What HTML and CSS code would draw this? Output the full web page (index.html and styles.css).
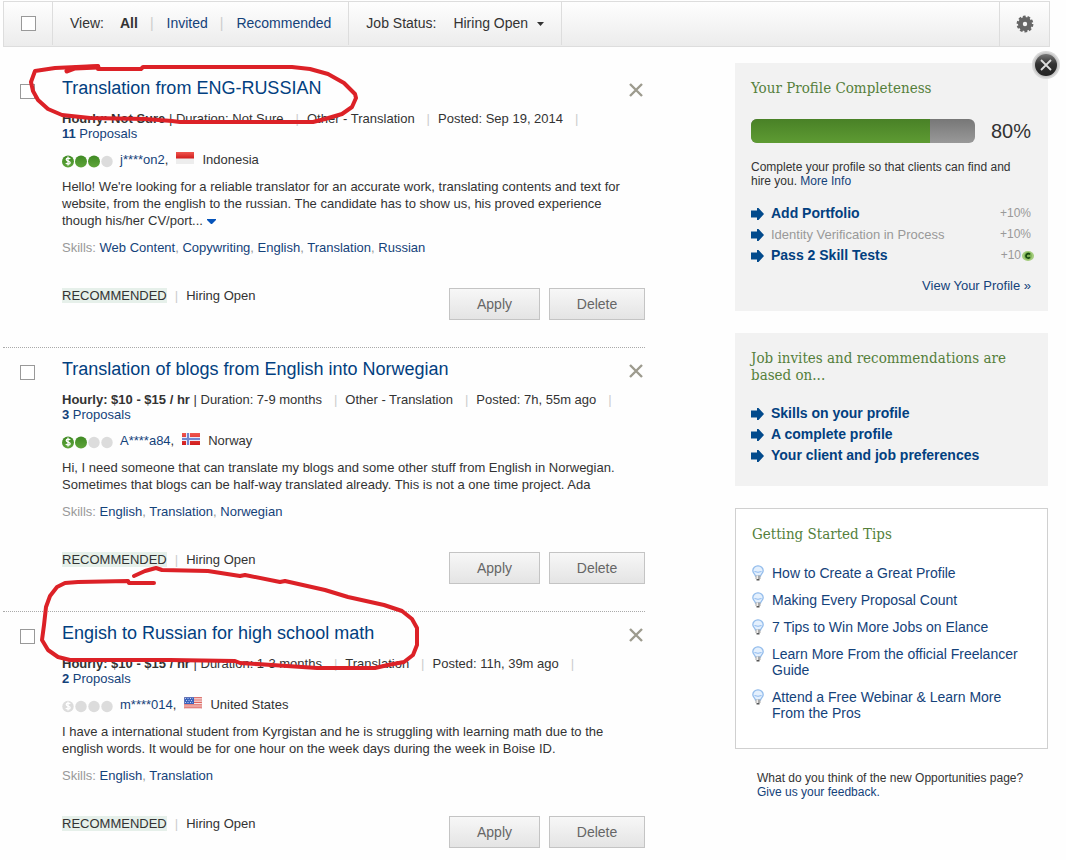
FILE: index.html
```html
<!DOCTYPE html>
<html lang="en">
<head>
    <meta charset="utf-8">
    <title>Opportunities</title>
    <link rel="stylesheet" href="styles.css">
</head>
<body>
    <!-- shared icons -->
    <svg class="defs" width="0" height="0" aria-hidden="true">
        <defs>
            <linearGradient id="greenGrad" x1="0" y1="0" x2="0" y2="1">
                <stop offset="0" stop-color="#3f8a24"/><stop offset="1" stop-color="#5fa53a"/>
            </linearGradient>
            <linearGradient id="badgeGrad" x1="0" y1="0" x2="0" y2="1">
                <stop offset="0" stop-color="#777"/><stop offset="0.45" stop-color="#333"/><stop offset="1" stop-color="#222"/>
            </linearGradient>
            <linearGradient id="redGrad" x1="0" y1="0" x2="0" y2="1">
                <stop offset="0" stop-color="#f0564f"/><stop offset="1" stop-color="#d01c1c"/>
            </linearGradient>
        </defs>
        <symbol id="arrow" viewBox="0 0 13 12"><path fill="#024a8c" d="M0 2.500h6V0h1.500L13 6l-5.500 6H6V9.500H0z"/></symbol>
        <symbol id="cross" viewBox="0 0 14 14"><path fill="none" stroke="#9d9b8e" stroke-width="2.4" d="M1 1l12 12M13 1L1 13"/></symbol>
        <symbol id="bulb" viewBox="0 0 12 16">
            <path fill="#e4f0fd" stroke="#94bdec" stroke-width="1.3" d="M6 .8a5 5 0 0 0-5.2 5c0 2.300 2.200 3 2.700 5.200h5C9 8.800 11.200 8.100 11.200 5.800A5 5 0 0 0 6 .8z"/>
            <path fill="none" stroke="#8fbaf0" d="M2.500 6.500q3.500 1.600 7 0"/>
            <path fill="#a9a9a9" d="M3.500 10.500h5V14h-5z"/>
            <path fill="#eee" d="M4.500 10.500h1.500V14H4.500z"/>
            <path fill="#555" d="M4.500 14h3v1.500h-3z"/>
        </symbol>
        <symbol id="dollar" viewBox="0 0 12 12">
            <path fill="none" stroke="#fff" stroke-width="1.300" d="M8.200 4C7.600 2.800 4.200 2.700 4.200 4.500S8.200 5.800 8.200 7.700 4.600 9.400 3.800 8M6 1.500v9"/>
        </symbol>
    </svg>

    <div class="wrapper">
        <div class="toolbar">
            <div class="cell check-cell"><input type="checkbox" class="check" aria-label="Select all jobs"></div>
            <div class="cell view-cell">
                <span class="view-label">View:</span>
                <a href="#" class="current">All</a>
                <span class="bar">|</span>
                <a href="#">Invited</a>
                <span class="bar">|</span>
                <a href="#">Recommended</a>
            </div>
            <div class="cell status-cell">
                <label for="status">Job Status:</label>
                <select id="status"><option>Hiring Open</option></select>
                <svg class="caret" width="7" height="4" viewBox="0 0 7 4"><path fill="#333" d="M0 0h7L3.500 4z"/></svg>
            </div>
            <button type="button" class="gear" aria-label="Settings">
                <svg width="18" height="18" viewBox="-9 -9 18 18">
                    <circle r="4.600" fill="none" stroke="#666" stroke-width="4.800"/>
                    <circle r="7.200" fill="none" stroke="#666" stroke-width="2.400" stroke-dasharray="2.720 1.804"/>
                </svg>
            </button>
        </div>

        <div class="columns">
            <div class="jobs">
                <div class="job">
                    <input type="checkbox" class="check" aria-label="Select Translation from ENG-RUSSIAN">
                    <div class="job-body">
                        <div class="job-head">
                            <h2><a href="#">Translation from ENG-RUSSIAN</a></h2>
                            <button type="button" class="remove" aria-label="Remove"><svg width="14" height="14"><use href="#cross"/></svg></button>
                        </div>
                        <div class="meta"><b>Hourly: Not Sure</b> | Duration: Not Sure<span class="sep">|</span>Other - Translation<span class="sep">|</span>Posted: Sep 19, 2014<span class="sep">|</span><br><a href="#"><b>11</b> Proposals</a></div>
                        <div class="client">
                            <svg class="dots" width="52" height="13" viewBox="0 0 52 13">
                                <g fill="url(#greenGrad)"><circle cx="6" cy="6.500" r="6"/><circle cx="19" cy="6.500" r="6"/><circle cx="32" cy="6.500" r="6"/></g>
                                <circle cx="45" cy="6.500" r="5.700" fill="#dcdcdc"/>
                                <use href="#dollar" width="12" height="12"/>
                            </svg>
                            <span><a href="#">j****on2</a>,</span>
                            <svg class="flag" width="18" height="12" viewBox="0 0 18 12"><path fill="#ededed" d="M0 0h18v12H0z"/><path fill="url(#redGrad)" d="M0 0h18v6.500H0z"/></svg>
                            <span>Indonesia</span>
                        </div>
                        <p>Hello! We're looking for a reliable translator for an accurate work, translating contents and text for website, from the english to the russian. The candidate has to show us, his proved experience though his/her CV/port... <svg class="more" width="9" height="5" viewBox="0 0 9 5"><path fill="#0654ba" d="M0 0h9v1L5 5H4L0 1z"/></svg></p>
                        <div class="skills">Skills: <a href="#">Web Content</a>, <a href="#">Copywriting</a>, <a href="#">English</a>, <a href="#">Translation</a>, <a href="#">Russian</a></div>
                        <div class="job-foot">
                            <div class="state"><span class="tag">RECOMMENDED</span><span class="bar">|</span>Hiring Open</div>
                            <button type="button" class="btn apply">Apply</button>
                            <button type="button" class="btn delete">Delete</button>
                        </div>
                    </div>
                </div>

                <div class="job">
                    <input type="checkbox" class="check" aria-label="Select Translation of blogs from English into Norwegian">
                    <div class="job-body">
                        <div class="job-head">
                            <h2><a href="#">Translation of blogs from English into Norwegian</a></h2>
                            <button type="button" class="remove" aria-label="Remove"><svg width="14" height="14"><use href="#cross"/></svg></button>
                        </div>
                        <div class="meta"><b>Hourly: $10 - $15 / hr</b> | Duration: 7-9 months<span class="sep">|</span>Other - Translation<span class="sep">|</span>Posted: 7h, 55m ago<span class="sep">|</span><br><a href="#"><b>3</b> Proposals</a></div>
                        <div class="client">
                            <svg class="dots" width="52" height="13" viewBox="0 0 52 13">
                                <g fill="url(#greenGrad)"><circle cx="6" cy="6.500" r="6"/><circle cx="19" cy="6.500" r="6"/></g>
                                <g fill="#dcdcdc"><circle cx="32" cy="6.500" r="5.700"/><circle cx="45" cy="6.500" r="5.700"/></g>
                                <use href="#dollar" width="12" height="12"/>
                            </svg>
                            <span><a href="#">A****a84</a>,</span>
                            <svg class="flag" width="18" height="12" viewBox="0 0 18 12"><path fill="url(#redGrad)" d="M0 0h18v12H0z"/><path fill="#e8e8f8" d="M4 0h4v12H4zM0 4h18v4H0z"/><path fill="#7287cf" d="M5 0h2v12H5zM0 5h18v2H0z"/></svg>
                            <span>Norway</span>
                        </div>
                        <p>Hi, I need someone that can translate my blogs and some other stuff from English in Norwegian. Sometimes that blogs can be half-way translated already. This is not a one time project. Ada</p>
                        <div class="skills">Skills: <a href="#">English</a>, <a href="#">Translation</a>, <a href="#">Norwegian</a></div>
                        <div class="job-foot">
                            <div class="state"><span class="tag">RECOMMENDED</span><span class="bar">|</span>Hiring Open</div>
                            <button type="button" class="btn apply">Apply</button>
                            <button type="button" class="btn delete">Delete</button>
                        </div>
                    </div>
                </div>

                <div class="job">
                    <input type="checkbox" class="check" aria-label="Select Engish to Russian for high school math">
                    <div class="job-body">
                        <div class="job-head">
                            <h2><a href="#">Engish to Russian for high school math</a></h2>
                            <button type="button" class="remove" aria-label="Remove"><svg width="14" height="14"><use href="#cross"/></svg></button>
                        </div>
                        <div class="meta"><b>Hourly: $10 - $15 / hr</b> | Duration: 1-3 months<span class="sep">|</span>Translation<span class="sep">|</span>Posted: 11h, 39m ago<span class="sep">|</span><br><a href="#"><b>2</b> Proposals</a></div>
                        <div class="client">
                            <svg class="dots" width="52" height="13" viewBox="0 0 52 13">
                                <g fill="#dcdcdc"><circle cx="6" cy="6.500" r="5.700"/><circle cx="19" cy="6.500" r="5.700"/><circle cx="32" cy="6.500" r="5.700"/><circle cx="45" cy="6.500" r="5.700"/></g>
                                <use href="#dollar" width="12" height="12"/>
                            </svg>
                            <span><a href="#">m****014</a>,</span>
                            <svg class="flag" width="18" height="12" viewBox="0 0 18 12"><path fill="#f7e4e4" d="M0 0h18v12H0z"/><path stroke="#e0635c" stroke-width="1.200" d="M0 .6h18M0 3h18M0 5.400h18M0 7.800h18M0 10.200h18"/><path fill="#3b63bd" d="M0 0h10v7H0z"/><path stroke="#c3d2f2" stroke-dasharray="1 1.500" d="M1 1.500h8M2 3.500h7M1 5.500h8"/><path fill="none" stroke="#d9a5a5" stroke-width=".5" d="M0 0h18v12H0z"/></svg>
                            <span>United States</span>
                        </div>
                        <p>I have a international student from Kyrgistan and he is struggling with learning math due to the english words. It would be for one hour on the week days during the week in Boise ID.</p>
                        <div class="skills">Skills: <a href="#">English</a>, <a href="#">Translation</a></div>
                        <div class="job-foot">
                            <div class="state"><span class="tag">RECOMMENDED</span><span class="bar">|</span>Hiring Open</div>
                            <button type="button" class="btn apply">Apply</button>
                            <button type="button" class="btn delete">Delete</button>
                        </div>
                    </div>
                </div>
            </div>

            <div class="sidebar">
                <div class="box profile">
                    <button type="button" class="close" aria-label="Close">
                        <svg width="28" height="28" viewBox="0 0 28 28">
                            <circle cx="14" cy="14" r="14" fill="#d9d9d9"/>
                            <circle cx="14" cy="14" r="12.500" fill="#c6c6c6"/>
                            <circle cx="14" cy="14" r="11" fill="url(#badgeGrad)"/>
                            <path stroke="#ddd" stroke-width="1.800" d="M9 9l10 10M19 9L9 19"/>
                        </svg>
                    </button>
                    <h3>Your Profile Completeness</h3>
                    <div class="progress">
                        <div class="track"><div class="fill" style="width: 80%"></div></div>
                        <span class="percent">80%</span>
                    </div>
                    <div class="note">Complete your profile so that clients can find and hire you. <a href="#">More Info</a></div>
                    <ul class="steps">
                        <li><svg width="13" height="12"><use href="#arrow"/></svg><a href="#">Add Portfolio</a><span class="gain">+10%</span></li>
                        <li><svg width="13" height="12"><use href="#arrow"/></svg><span class="pending">Identity Verification in Process</span><span class="gain">+10%</span></li>
                        <li><svg width="13" height="12"><use href="#arrow"/></svg><a href="#">Pass 2 Skill Tests</a><span class="gain coin">+10<svg width="12" height="12" viewBox="0 0 12 12"><ellipse cx="6" cy="6" rx="6" ry="5" fill="#a3cc7c"/><circle cx="6" cy="5.800" r="3.800" fill="#7fb356"/><path fill="none" stroke="#164a10" stroke-width="1.700" d="M7.900 4.500a2.200 2.200 0 1 0 0 2.800"/></svg></span></li>
                    </ul>
                    <div class="view-profile"><a href="#">View Your Profile »</a></div>
                </div>

                <div class="box basis">
                    <h3>Job invites and recommendations are based on...</h3>
                    <ul class="steps">
                        <li><svg width="13" height="12"><use href="#arrow"/></svg><a href="#">Skills on your profile</a></li>
                        <li><svg width="13" height="12"><use href="#arrow"/></svg><a href="#">A complete profile</a></li>
                        <li><svg width="13" height="12"><use href="#arrow"/></svg><a href="#">Your client and job preferences</a></li>
                    </ul>
                </div>

                <div class="box tips">
                    <h3>Getting Started Tips</h3>
                    <ul>
                        <li><svg width="12" height="16"><use href="#bulb"/></svg><a href="#">How to Create a Great Profile</a></li>
                        <li><svg width="12" height="16"><use href="#bulb"/></svg><a href="#">Making Every Proposal Count</a></li>
                        <li><svg width="12" height="16"><use href="#bulb"/></svg><a href="#">7 Tips to Win More Jobs on Elance</a></li>
                        <li><svg width="12" height="16"><use href="#bulb"/></svg><a href="#">Learn More From the official Freelancer Guide</a></li>
                        <li><svg width="12" height="16"><use href="#bulb"/></svg><a href="#">Attend a Free Webinar &amp; Learn More From the Pros</a></li>
                    </ul>
                </div>

                <div class="feedback">What do you think of the new Opportunities page?<br><a href="#">Give us your feedback.</a></div>
            </div>
        </div>
    </div>

    <!-- red pen marks -->
    <svg class="marks" width="440" height="700" viewBox="0 0 440 700" aria-hidden="true">
        <path stroke-width="5" d="M67 71L75 68 98 67"/>
        <path d="M98 69L141 69 143 67 292 67 310 69 328 74 344 83 355 94 356 98 352 107 342 114 325 119 313 122 180 122 172 121 145 119 90 118 62 115 48 109 38 100 33 91 31 82 35 71 55 68 98 66"/>
        <path d="M154 583L129 583 128 581 78 582 65 583 57 587 50 596 46 607 44 625 42 640 48 650 58 657 70 660 170 660 235 661 240 663 272 665 317 668 375 668 388 665 404 662 413 655 417 645 417 628 412 619 402 611 384 605 348 597 325 590 285 581 280 582 245 575 240 576 208 571 162 570 156 568 145 571 134 576"/>
    </svg>
</body>
</html>
```
FILE: styles.css
```css
* {
    box-sizing: border-box;
}
body {
    position: relative;
    margin: 0;
    background: #fefefe;
    color: #333;
    font-family: "Liberation Sans", Arial, sans-serif;
    font-size: 13px;
    line-height: 15px;
}
a {
    color: #14427a;
    text-decoration: none;
}
a:hover {
    text-decoration: underline;
}
h2, h3, p, ul {
    margin: 0;
    padding: 0;
    font-weight: normal;
}
ul {
    list-style: none;
}
button, select {
    margin: 0;
    padding: 0;
    border: 0;
    background: none;
    color: inherit;
    font: inherit;
    cursor: pointer;
}
svg {
    display: block;
    flex: none;
}
.defs {
    position: absolute;
}
.wrapper {
    padding: 1px 16px 0 3px;
}
.check {
    flex: none;
    appearance: none;
    width: 15px;
    height: 15px;
    margin: 0;
    border: 1px solid #999;
    background: #fff;
}
.check:checked {
    background: #024a8c;
}
.bar, .sep {
    color: #ccc;
}

/* toolbar */
.toolbar {
    display: flex;
    height: 46px;
    border: 1px solid #ddd;
    background: linear-gradient(#fefefe, #ececec);
    font-size: 14px;
}
.cell {
    display: flex;
    align-items: center;
    height: 43px;
    border-right: 1px solid #ddd;
}
.check-cell {
    padding: 0 16px 0 17px;
}
.view-cell {
    gap: 12px;
    padding: 0 17px;
}
.view-label {
    margin-right: 4px;
}
.view-cell .bar {
    padding-right: 1px;
}
.current {
    color: #333;
    font-weight: bold;
}
.status-cell {
    padding: 0 17px;
}
.status-cell select {
    appearance: none;
    margin: 0 9px 0 17px;
}
.gear {
    display: flex;
    align-items: center;
    justify-content: center;
    width: 50px;
    margin-left: auto;
    border-left: 1px solid #ddd;
}

/* job list */
.columns {
    display: flex;
    justify-content: space-between;
    align-items: flex-start;
    gap: 24px;
}
.jobs {
    flex: 0 1 642px;
    padding-top: 20px;
}
.job {
    display: flex;
    gap: 27px;
    padding: 10px 0 27px 17px;
}
.job + .job {
    border-top: 1px dotted #aaa;
}
.job > .check {
    margin-top: 7px;
}
.job-body {
    flex: 1;
}
.job-head {
    display: flex;
    justify-content: space-between;
    height: 22px;
    margin-bottom: 12px;
}
.job-head h2 {
    font-size: 18px;
    line-height: 22px;
}
.job-head a {
    color: #024080;
}
.remove {
    padding: 6px 2px 2px;
}
.sep {
    margin: 0 8px 0 12px;
}
.client {
    display: flex;
    align-items: center;
    height: 20px;
    margin: 8px 0 9px;
}
.dots {
    margin: 4px 6px 0 0;
}
.flag {
    margin: 0 8px 2px;
}
.job p {
    max-width: 572px;
    line-height: 17px;
}
.more {
    display: inline-block;
    vertical-align: 1px;
}
.skills {
    margin: 11px 0 33px;
    color: #999;
}
.job-foot {
    display: flex;
    gap: 9px;
}
.state {
    flex: 1;
}
.state .bar {
    margin: 0 8px;
}
.tag {
    background: #e6f0ea;
}
.btn {
    height: 32px;
    border: 1px solid #c4c4c4;
    background: linear-gradient(#f7f7f7, #e4e4e4);
    color: #666;
    font-size: 14px;
}
.apply {
    width: 91px;
}
.delete {
    width: 96px;
}

/* right column */
.sidebar {
    flex: 0 0 313px;
    margin: 16px 2px 0 0;
}
.box {
    position: relative;
    margin-bottom: 22px;
    padding: 17px 17px 20px 16px;
    background: #f2f2f2;
}
.profile {
    padding-bottom: 17px;
}
.close {
    position: absolute;
    top: -12px;
    right: -12px;
}
.box h3 {
    color: #557f3b;
    font-family: "DejaVu Serif Condensed", "DejaVu Serif", Georgia, serif;
    font-size: 15px;
    line-height: 17px;
}
.basis h3 {
    padding-right: 16px;
}
.progress {
    display: flex;
    align-items: center;
    justify-content: space-between;
    height: 24px;
    margin: 22px 0 17px;
}
.track {
    flex: 0 0 224px;
    height: 24px;
    border-radius: 6px;
    background: linear-gradient(#777, #999);
    overflow: hidden;
}
.fill {
    height: 100%;
    background: linear-gradient(#498127, #5e9b33);
}
.percent {
    font-size: 20px;
}
.note, .feedback {
    font-size: 12px;
    line-height: 14px;
}
.steps {
    margin-top: 15px;
}
.basis .steps {
    margin-top: 19px;
}
.steps li {
    display: flex;
    align-items: center;
    gap: 7px;
    height: 21px;
}
.steps a {
    color: #024080;
    font-size: 14px;
    font-weight: bold;
}
.pending, .gain {
    color: #999;
}
.gain {
    margin-left: auto;
    font-size: 12px;
}
.coin {
    display: flex;
    align-items: center;
    gap: 1px;
    margin-right: -3px;
}
.view-profile {
    margin-top: 12px;
    line-height: 16px;
    text-align: right;
}
.tips {
    padding: 17px 16px 16px;
    border: 1px solid #d0d0d0;
    background: #fff;
}
.tips ul {
    margin-top: 22px;
    font-size: 14px;
    line-height: 16px;
}
.tips li {
    display: flex;
    align-items: flex-start;
    gap: 8px;
    margin-bottom: 11px;
}
.feedback {
    padding-left: 22px;
}

/* hand-drawn circles over the list */
.marks {
    position: absolute;
    top: 0;
    left: 0;
    fill: none;
    stroke: #dc2127;
    stroke-width: 4;
    stroke-linecap: round;
    stroke-linejoin: round;
    pointer-events: none;
}
```
